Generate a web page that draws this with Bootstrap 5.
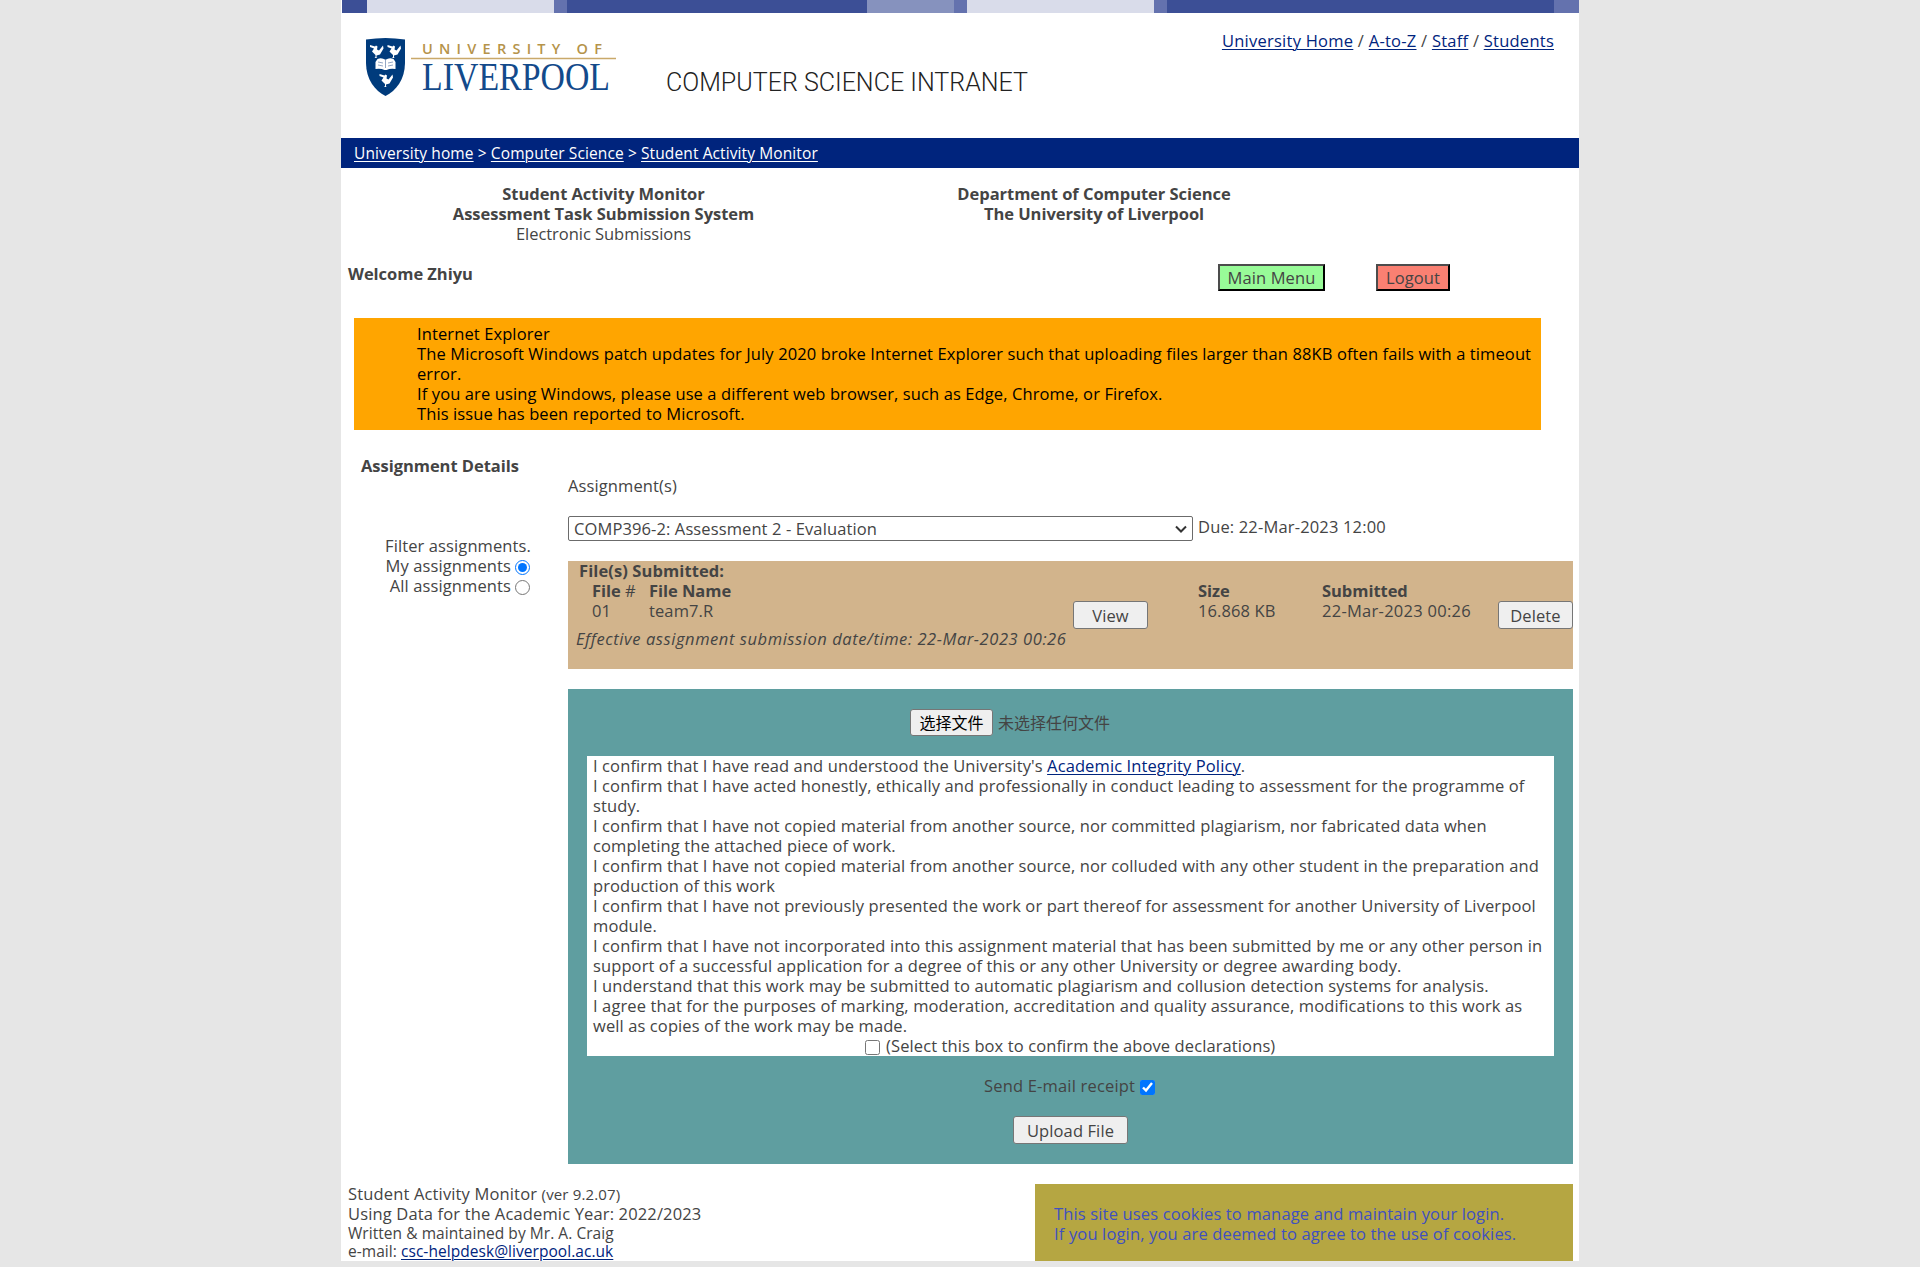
<!DOCTYPE html>
<html lang="en">
<head>
<meta charset="utf-8">
<title>Student Activity Monitor</title>
<link href="https://cdn.jsdelivr.net/npm/bootstrap@5.3.0/dist/css/bootstrap.min.css" rel="stylesheet">
<style>
body{background:#e6e6e6;color:#444;font:16.5px/20px "Open Sans","Noto Sans","Noto Sans CJK SC",sans-serif;letter-spacing:.107px;overflow:hidden}
a,a:hover{color:#00247d;text-decoration:underline;text-underline-offset:2px;text-decoration-thickness:1px}
button,.t{font-size:inherit;letter-spacing:inherit}
.t{display:inline-block;white-space:nowrap}
.sheet{width:1238px;height:1261px;background:#fff}
.strip{height:13px;padding-left:1px}
.c1{background:#3c4f96}.c2{background:#d9dcea}.c3{background:#6472ae}.c4{background:#8692be}
.w13{width:13px}.w25{width:25px}.w87{width:87px}.w187{width:187px}.w300{width:300px}
.banner{height:125px;padding:18px 25px 0 25px}
.toplinks{letter-spacing:.25px}
.crumbs{height:30px;background:#00247d;color:#fff;font-size:15.5px;padding:5px 13px 0;white-space:nowrap}
.crumbs a{color:#fff}
.b2{font-weight:700;letter-spacing:-.04px}
.heads{padding-top:16px;height:96px}
.head-l{width:525px}.head-r{width:456px}
.welcome{height:54px;padding-left:7px}
.greeting{width:870px}
.menu-btn{border:2px solid;border-color:#4c4c4c #000 #000 #4c4c4c;background:#98fb98;height:27px;padding:1px 0 0;color:#444;line-height:20px;width:107px}
.out-btn{background:#fa8072;width:74px;margin-left:51px}
.notice{background:#ffa500;color:#000;margin-left:13px;width:1187px;height:112px;padding:6px 0 0 63px}
.side{width:190px;padding:26px 0 0 20px}
.filter-head{margin-top:60px}
.opt{height:20px;gap:4px}
.opt .ctl{margin:4px 1px 0 0}
.work{width:1005px;margin-left:37px;padding-top:46px}
.pick-row{margin-top:20px}
.pick{height:25px;width:625px;border:1px solid #6b6b6b;border-radius:2px;padding:2px 5px}
.due{margin:1px 0 0 5px;letter-spacing:.16px}
.ctl{margin:0;width:15px;height:15px;flex:none}
.gray-btn{border:1px solid #767676;border-radius:3px;background:#efefef;color:#444;height:28px;width:75px;padding:2px 0 0;line-height:20px}
.row-btn{margin-top:20px}
.files{background:#d2b48c;height:108px;margin-top:20px}
.files-title{padding-left:11px;letter-spacing:.1px}
.files-grid{padding-left:24px}
.col-no{width:57px}.col-name{width:424px}.col-size{width:124px;margin-left:50px}.col-date{width:176px}
.col-date .t:last-child{letter-spacing:.27px}
.effective{padding-left:8px;letter-spacing:.57px}
.upload{background:#5f9ea0;height:475px;margin-top:20px;padding-top:20px}
.chooser{padding-left:342px;gap:5px;font-size:16px;letter-spacing:0}
.file-btn{width:83px;height:27px;color:#000;padding:0}
.agree{background:#fff;width:967px;height:300px;margin:20px 0 0 19px;padding-left:6px}
.confirm{padding-left:272px;gap:6px}
.confirm .ctl,.receipt .ctl{margin-top:4px}
.receipt{margin:20px 0 0 416px;gap:5px;letter-spacing:.18px}
.send-btn{width:115px;margin:20px 0 0 445px}
.foot{height:77px;margin-top:20px}
.about{padding-left:7px;letter-spacing:.15px}
.about div{height:20px}
.about .ver{font-size:15px}
.about .fine{font-size:15.5px;line-height:18px;height:36px;letter-spacing:.05px;padding-top:0}
.cookie{background:#b5a642;color:#4050c0;width:538px;margin-right:6px;padding:20px 0 0 19px;letter-spacing:.15px}
</style>
<script src="https://cdn.jsdelivr.net/npm/bootstrap@5.3.0/dist/js/bootstrap.bundle.min.js"></script>
</head>
<body>
<div class="sheet mx-auto">
 <div class="strip d-flex"><i class="c1 w25"></i><i class="c2 w187"></i><i class="c3 w13"></i><i class="c1 w300"></i><i class="c4 w87"></i><i class="c3 w13"></i><i class="c2 w187"></i><i class="c3 w13"></i><i class="c1 flex-fill"></i><i class="c3 w25"></i></div>
 <div class="banner d-flex justify-content-between">
  <svg width="670" height="75" viewBox="0 0 670 75" letter-spacing="0">
   <path d="M0 8.500Q10 7 19.500 7T39 8.500V32C39 48 30 60 19.500 65C9 60 0 48 0 32Z" fill="#003b7c"/>
   <g fill="#fff"><g id="bird"><path d="M4 14l5 1.500l1-1l1.500 1l-.5 3l2 1l4-5l.5 3l-3.500 6l-3.500 1v2l1 .5h-3l1-1v-2L6 20.500L8 17.500L4 16Z"/></g><use href="#bird" x="17.500"/><use href="#bird" x="9.500" y="29"/><path d="M9.500 31l2-3q4-2 8 .8q4-2.800 8-.8l2 3v7q-5-1-9 1h-2q-4-2-9-1Z"/><path d="M19.500 29v8M12 31l5 1M22 32l5-1M12 34l5 1M22 35l5-1" stroke="#7890b5" stroke-width=".8"/></g>
   <text x="56" y="23" font-family="Open Sans" font-size="14.500" font-weight="600" fill="#b5934a" textLength="180">UNIVERSITY OF</text>
   <path d="M45 27.500h205" stroke="#c9a96a" stroke-width="1.500"/>
   <text x="56" y="59" font-family="Liberation Serif" font-size="41" fill="#134a8b" textLength="188" lengthAdjust="spacingAndGlyphs">LIVERPOOL</text>
   <text x="300" y="60" font-family="Roboto" font-weight="300" font-size="25" fill="#222" textLength="362" lengthAdjust="spacingAndGlyphs">COMPUTER SCIENCE INTRANET</text>
  </svg>
  <div class="toplinks pt-0"><span class="t"><a href="#">University Home</a> / <a href="#">A-to-Z</a> / <a href="#">Staff</a> / <a href="#">Students</a></span></div>
 </div>
 <div class="crumbs"><a href="#">University home</a> &gt; <a href="#">Computer Science</a> &gt; <a href="#">Student Activity Monitor</a></div>
 <div class="heads d-flex text-center">
  <div class="head-l b2">Student Activity Monitor<br>Assessment Task Submission System<br><span class="fw-normal">Electronic Submissions</span></div>
  <div class="head-r b2">Department of Computer Science<br>The University of Liverpool</div>
 </div>
 <div class="welcome d-flex"><div class="greeting b2">Welcome Zhiyu</div><button class="menu-btn">Main Menu</button><button class="menu-btn out-btn">Logout</button></div>
 <div class="notice text-nowrap">Internet Explorer<br>The Microsoft Windows patch updates for July 2020 broke Internet Explorer such that uploading files larger than 88KB often fails with a timeout<br>error.<br>If you are using Windows, please use a different web browser, such as Edge, Chrome, or Firefox.<br>This issue has been reported to Microsoft.</div>
 <div class="d-flex">
  <div class="side">
   <div class="b2">Assignment Details</div>
   <div class="filter-head text-end">Filter assignments.</div>
   <label class="opt d-flex justify-content-end">My assignments<input class="ctl" type="radio" name="f" checked></label>
   <label class="opt d-flex justify-content-end">All assignments<input class="ctl" type="radio" name="f"></label>
  </div>
  <div class="work">
   <div>Assignment(s)</div>
   <div class="pick-row d-flex"><div class="pick d-flex justify-content-between"><span>COMP396-2: Assessment 2 - Evaluation</span><svg width="14" height="20" viewBox="0 0 14 20"><path d="M3 7.500l5 5l5-5" fill="none" stroke="#333" stroke-width="2"/></svg></div><span class="due">Due: 22-Mar-2023 12:00</span></div>
   <div class="files">
    <div class="b2 files-title">File(s) Submitted:</div>
    <div class="d-flex files-grid">
     <div class="col-no text-nowrap"><span class="b2">File</span> #<br>01</div>
     <div class="col-name"><span class="b2">File Name</span><br>team7.R</div>
     <button class="gray-btn row-btn">View</button>
     <div class="col-size"><span class="b2">Size</span><br>16.868 KB</div>
     <div class="col-date"><span class="b2">Submitted</span><br><span class="t">22-Mar-2023 00:26</span></div>
     <button class="gray-btn row-btn">Delete</button>
    </div>
    <div class="fst-italic effective">Effective assignment submission date/time: 22-Mar-2023 00:26</div>
   </div>
   <div class="upload">
    <div class="chooser d-flex align-items-center"><button class="gray-btn file-btn">选择文件</button><span>未选择任何文件</span></div>
    <div class="agree text-nowrap">I confirm that I have read and understood the University's <a href="#">Academic Integrity Policy</a>.<br>I confirm that I have acted honestly, ethically and professionally in conduct leading to assessment for the programme of<br>study.<br>I confirm that I have not copied material from another source, nor committed plagiarism, nor fabricated data when<br>completing the attached piece of work.<br>I confirm that I have not copied material from another source, nor colluded with any other student in the preparation and<br>production of this work<br>I confirm that I have not previously presented the work or part thereof for assessment for another University of Liverpool<br>module.<br>I confirm that I have not incorporated into this assignment material that has been submitted by me or any other person in<br>support of a successful application for a degree of this or any other University or degree awarding body.<br>I understand that this work may be submitted to automatic plagiarism and collusion detection systems for analysis.<br>I agree that for the purposes of marking, moderation, accreditation and quality assurance, modifications to this work as<br>well as copies of the work may be made.
     <label class="confirm d-flex"><input class="ctl" type="checkbox">(Select this box to confirm the above declarations)</label>
    </div>
    <label class="receipt d-flex">Send E-mail receipt<input class="ctl" type="checkbox" checked></label>
    <button class="gray-btn send-btn">Upload File</button>
   </div>
  </div>
 </div>
 <div class="foot d-flex justify-content-between">
  <div class="about"><div>Student Activity Monitor <span class="ver">(ver 9.2.07)</span></div><div>Using Data for the Academic Year: 2022/2023</div><div class="fine">Written &amp; maintained by Mr. A. Craig<br>e-mail: <a href="#">csc-helpdesk@liverpool.ac.uk</a></div></div>
  <div class="cookie">This site uses cookies to manage and maintain your login.<br>If you login, you are deemed to agree to the use of cookies.</div>
 </div>
</div>
</body>
</html>
